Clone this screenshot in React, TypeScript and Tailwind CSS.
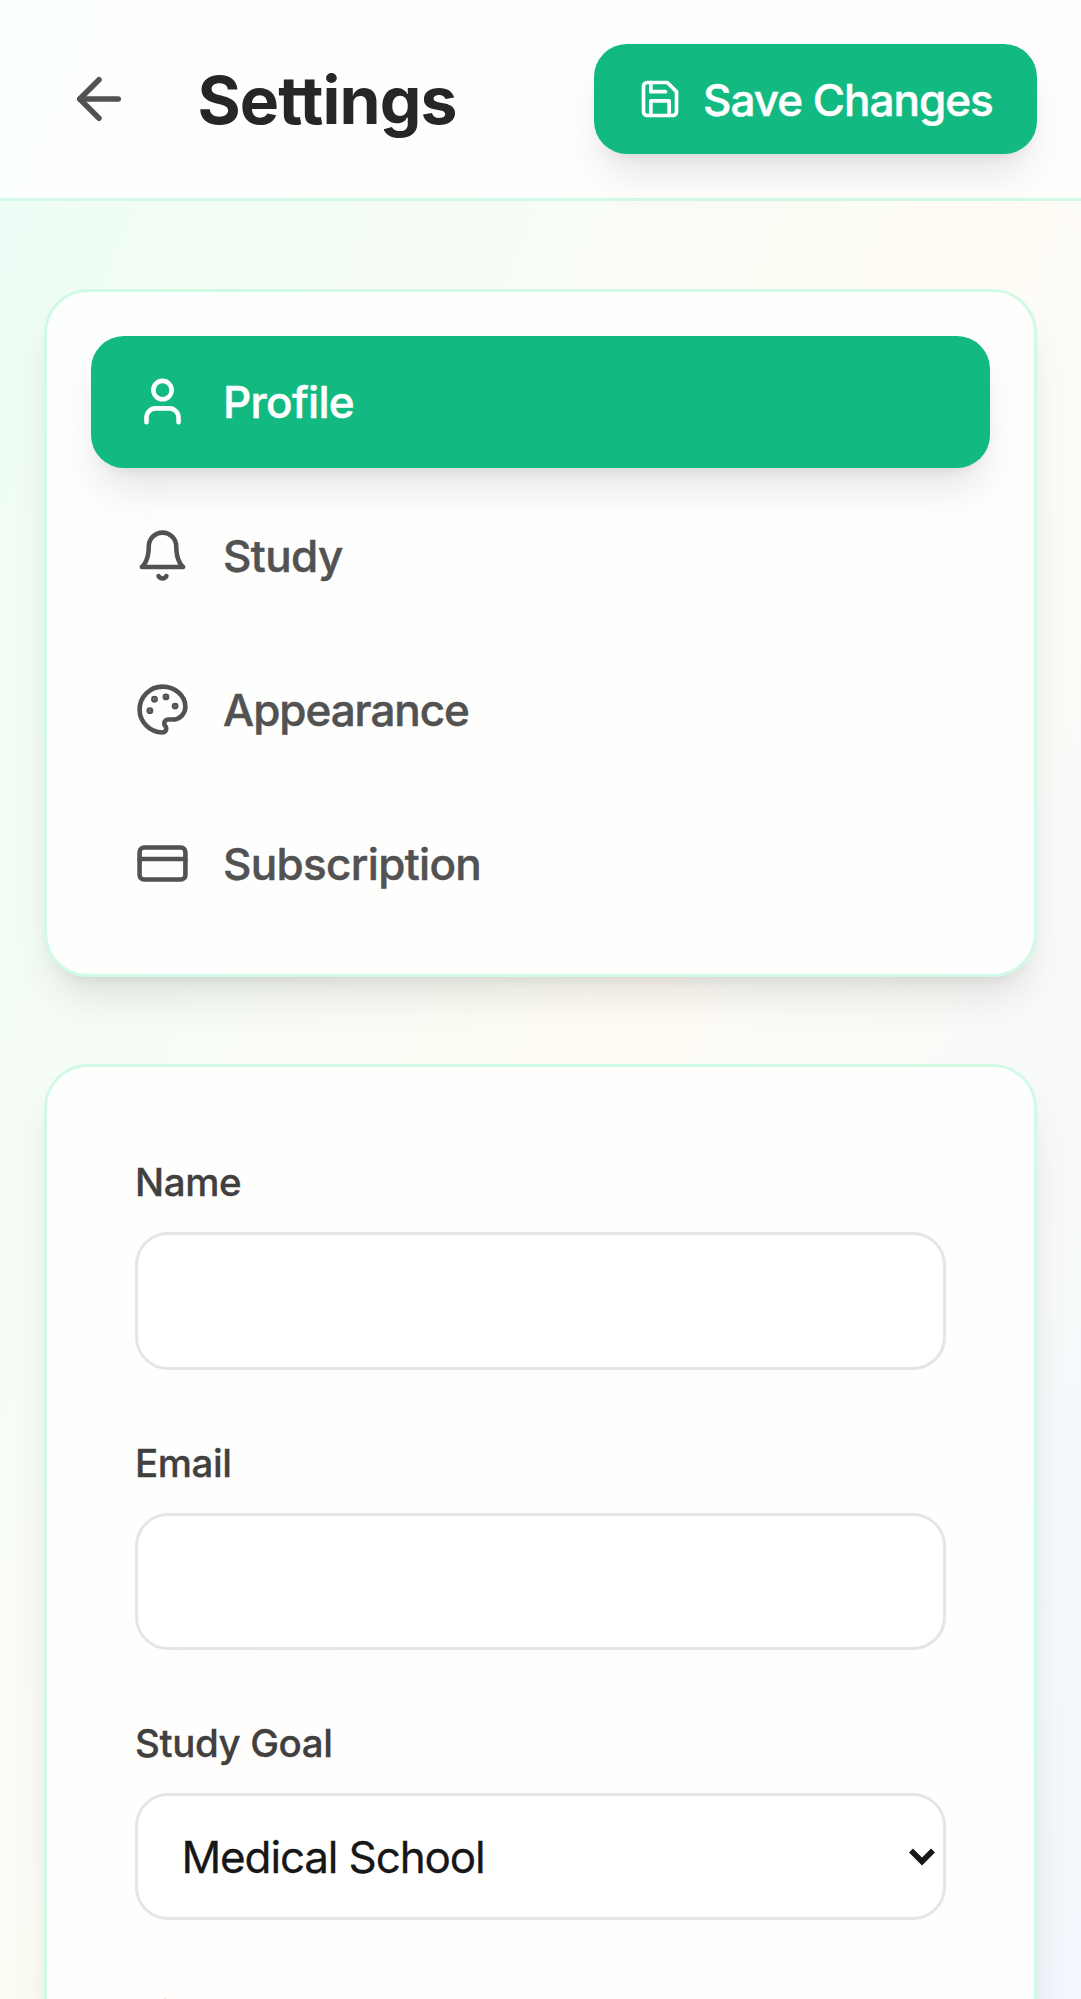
import type { ReactNode } from "react";

function Icon({ className, children }: { className: string; children: ReactNode }) {
  return (
    <svg
      viewBox="0 0 24 24"
      fill="none"
      stroke="currentColor"
      strokeWidth="2"
      strokeLinecap="round"
      strokeLinejoin="round"
      className={className}
    >
      {children}
    </svg>
  );
}

const tabs = [
  {
    label: "Profile",
    active: true,
    tracking: "tracking-[-0.7px]",
    icon: (
      <>
        <path d="M19 21v-2a4 4 0 0 0-4-4H9a4 4 0 0 0-4 4v2" />
        <circle cx="12" cy="7" r="4" />
      </>
    ),
  },
  {
    label: "Study",
    active: false,
    tracking: "tracking-[-0.6px]",
    icon: (
      <>
        <path d="M6 8a6 6 0 0 1 12 0c0 7 3 9 3 9H3s3-2 3-9" />
        <path d="M10.3 21a1.94 1.94 0 0 0 3.4 0" />
      </>
    ),
  },
  {
    label: "Appearance",
    active: false,
    tracking: "tracking-[-1.05px]",
    icon: (
      <>
        <circle cx="13.5" cy="6.5" r=".5" fill="currentColor" />
        <circle cx="17.5" cy="10.5" r=".5" fill="currentColor" />
        <circle cx="8.5" cy="7.5" r=".5" fill="currentColor" />
        <circle cx="6.5" cy="12.5" r=".5" fill="currentColor" />
        <path d="M12 2C6.5 2 2 6.5 2 12s4.5 10 10 10c.926 0 1.648-.746 1.648-1.688 0-.437-.18-.835-.437-1.125-.29-.289-.438-.652-.438-1.125a1.64 1.64 0 0 1 1.668-1.668h1.996c3.051 0 5.555-2.503 5.555-5.554C21.965 6.012 17.461 2 12 2z" />
      </>
    ),
  },
  {
    label: "Subscription",
    active: false,
    tracking: "tracking-[-0.67px]",
    icon: (
      <>
        <rect width="20" height="14" x="2" y="5" rx="2" />
        <path d="M2 10h20" />
      </>
    ),
  },
];

function Field({ label, children }: { label: string; children: ReactNode }) {
  return (
    <div className="last:pt-[1px]">
      <label className="mb-[22px] block text-[38.5px] leading-[55px] font-medium tracking-[-0.4px] text-neutral-700 [-webkit-text-stroke:0.3px_currentColor]">
        {label}
      </label>
      {children}
    </div>
  );
}

export default function App() {
  return (
    <div className="h-[1999px] overflow-hidden font-['Inter','Liberation_Sans',sans-serif]">
      <div className="h-[2450px] bg-linear-to-br from-[#ecfdf5] via-[#fffcf5] to-[#eff6ff]">
        <header className="flex h-[201px] items-center justify-between border-b-[3px] border-[#d0fae5] bg-white/80 px-[44px]">
          <div className="flex items-center gap-[43.5px]">
            <button className="p-[22px] text-neutral-600" aria-label="Back">
              <Icon className="size-[66px]">
                <path d="m12 19-7-7 7-7" />
                <path d="M19 12H5" />
              </Icon>
            </button>
            <h1 className="pt-[1px] text-[66px] leading-[88px] font-bold tracking-[-0.9px] text-neutral-800">
              Settings
            </h1>
          </div>
          <button className="flex h-[110px] w-[443px] items-center gap-[21px] rounded-[33px] bg-[#12b981] pl-[44px] text-[44px] font-medium whitespace-nowrap text-white shadow-[0_27px_41px_-8px_rgba(0,0,0,0.1),0_11px_16px_-11px_rgba(0,0,0,0.1)]">
            <Icon className="size-[44px] shrink-0">
              <path d="M19 21H5a2 2 0 0 1-2-2V5a2 2 0 0 1 2-2h11l5 5v11a2 2 0 0 1-2 2z" />
              <path d="M17 21v-8H7v8" />
              <path d="M7 3v5h8" />
            </Icon>
            <span className="pt-[2px] tracking-[-1px] [-webkit-text-stroke:0.5px_currentColor]">Save Changes</span>
          </button>
        </header>

        <main className="flex flex-col gap-[87px] px-[44px] pt-[88px]">
          <nav className="flex flex-col gap-[22px] rounded-[44px] border-[3px] border-[#d0fae5] bg-white/80 px-[44px] pt-[43.5px] pb-[44.5px] shadow-[0_27px_41px_-8px_rgba(0,0,0,0.1),0_11px_16px_-11px_rgba(0,0,0,0.1)]">
            {tabs.map((tab) => (
              <button
                key={tab.label}
                className={
                  tab.active
                    ? "flex h-[132px] items-center gap-[33px] rounded-[33px] bg-[#12b981] px-[44px] text-white shadow-[0_27px_41px_-8px_rgba(0,0,0,0.1),0_11px_16px_-11px_rgba(0,0,0,0.1)]"
                    : "flex h-[132px] items-center gap-[33px] rounded-[33px] px-[44px] text-neutral-600"
                }
              >
                <Icon className="mb-[1px] size-[55px] shrink-0">{tab.icon}</Icon>
                <span
                  className={`text-[44px] leading-[66px] font-medium [-webkit-text-stroke:0.5px_currentColor] ${tab.tracking}`}
                >
                  {tab.label}
                </span>
              </button>
            ))}
          </nav>

          <section className="flex flex-col gap-[66px] rounded-[44px] border-[3px] border-[#d0fae5] bg-white/80 p-[88px] shadow-[0_27px_41px_-8px_rgba(0,0,0,0.1),0_11px_16px_-11px_rgba(0,0,0,0.1)]">
            <Field label="Name">
              <input className="block h-[137.5px] w-full rounded-[33px] border-[3px] border-neutral-200 bg-white px-[44px] text-[44px]" />
            </Field>
            <Field label="Email">
              <input className="block h-[137.5px] w-full rounded-[33px] border-[3px] border-neutral-200 bg-white px-[44px] text-[44px]" />
            </Field>
            <Field label="Study Goal">
              <button className="flex h-[127px] w-full items-center justify-between rounded-[33px] border-[3px] border-neutral-200 bg-white pr-[8.5px] pl-[43.5px] text-neutral-900">
                <span className="text-[44px] tracking-[-1.15px] [-webkit-text-stroke:0.3px_currentColor]">
                  Medical School
                </span>
                <svg viewBox="0 0 26 18" fill="none" stroke="currentColor" strokeWidth="5.5" className="h-[18px] w-[26px]">
                  <path d="M2 2.5 13 13.5 24 2.5" />
                </svg>
              </button>
            </Field>
            <Field label="Bio">
              <textarea className="block h-[264px] w-full rounded-[33px] border-[3px] border-neutral-200 bg-white" />
            </Field>
          </section>
        </main>
      </div>
    </div>
  );
}
